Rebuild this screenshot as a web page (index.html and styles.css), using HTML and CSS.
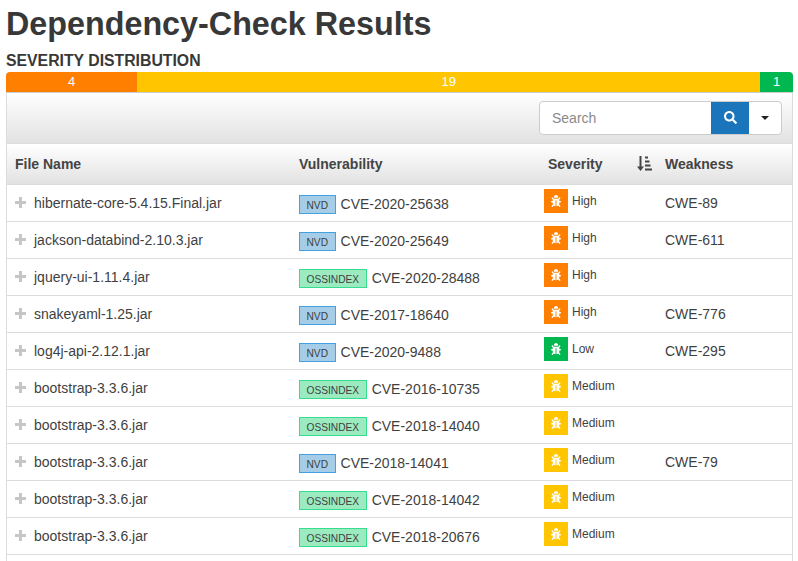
FILE: index.html
```html
<!DOCTYPE html>
<html lang="en">
<head>
    <meta charset="UTF-8">
    <title>Dependency-Check Results</title>
    <link rel="stylesheet" href="styles.css">
</head>
<body>
    <svg class="defs" width="0" height="0">
        <symbol id="bug" viewBox="0 0 512 512" preserveAspectRatio="none"><path d="M511.988 288.9c-.478 17.43-15.217 31.1-32.653 31.1H424v16c0 21.864-4.882 42.584-13.6 61.145l60.228 60.228c12.496 12.497 12.496 32.758 0 45.255-12.498 12.497-32.759 12.496-45.256 0l-54.736-54.736C345.886 467.965 314.351 480 280 480V236c0-6.627-5.373-12-12-12h-24c-6.627 0-12 5.373-12 12v244c-34.351 0-65.886-12.035-90.636-32.108l-54.736 54.736c-12.497 12.497-32.758 12.496-45.255 0-12.497-12.497-12.496-32.758 0-45.255l60.227-60.228C92.882 378.584 88 357.864 88 336v-16H32.666C15.23 320 .491 306.33.013 288.9-.484 270.816 14.028 256 32 256h56v-58.745l-46.628-46.628c-12.496-12.497-12.496-32.758 0-45.255 12.498-12.497 32.758-12.497 45.256 0L141.255 160h229.489l54.627-54.627c12.498-12.497 32.758-12.497 45.256 0 12.496 12.497 12.496 32.758 0 45.255L424 197.255V256h56c17.972 0 32.484 14.816 31.988 32.9zM257 0c-61.856 0-112 50.144-112 112h224C369 50.144 318.856 0 257 0z"/></symbol>
        <symbol id="plus" viewBox="0 0 11 11"><path d="M4 0h3v4h4v3H7v4H4V7H0V4h4z"/></symbol>
    </svg>

    <h1>Dependency-Check Results</h1>
    <h2>SEVERITY DISTRIBUTION</h2>
    <div class="dist">
        <div class="dist-high">4</div>
        <div class="dist-medium">19</div>
        <div class="dist-low">1</div>
    </div>

    <div class="panel">
        <div class="toolbar">
            <div class="search">
                <span class="search-input">Search</span>
                <span class="search-btn">
                    <svg width="13" height="13" viewBox="0 0 512 512"><path d="M505 442.7L405.3 343c-4.5-4.5-10.6-7-17-7H372c27.6-35.3 44-79.7 44-128C416 93.1 322.9 0 208 0S0 93.1 0 208s93.1 208 208 208c48.3 0 92.7-16.4 128-44v16.3c0 6.4 2.5 12.5 7 17l99.7 99.7c9.4 9.4 24.6 9.4 33.9 0l28.3-28.3c9.4-9.4 9.4-24.6.1-34zM208 336c-70.7 0-128-57.2-128-128 0-70.7 57.2-128 128-128 70.7 0 128 57.2 128 128 0 70.7-57.2 128-128 128z"/></svg>
                </span>
                <span class="search-menu"><span class="caret"></span></span>
            </div>
        </div>
        <table>
            <colgroup>
                <col class="col-file">
                <col class="col-vuln">
                <col class="col-sev">
                <col class="col-weak">
            </colgroup>
            <thead>
                <tr>
                    <th>File Name</th>
                    <th>Vulnerability</th>
                    <th>
                        <div class="sev-head">
                            <span>Severity</span>
                            <svg width="15" height="15" viewBox="0 0 15 15"><path d="M2.500 0h2v10.500h2.500L3.500 15 0 10.500h2.500z"/><path d="M8 0.500h3v2H8zM8 4.500h4.500v2H8zM8 8.500h5.500v2H8zM8 12.500h7v2H8z"/></svg>
                        </div>
                    </th>
                    <th>Weakness</th>
                </tr>
            </thead>
            <tbody>
                <tr>
                    <td><svg class="plus"><use href="#plus"/></svg>hibernate-core-5.4.15.Final.jar</td>
                    <td class="vuln"><span class="tag tag-nvd">NVD</span>CVE-2020-25638</td>
                    <td class="sev"><span class="bug bug-high"><svg><use href="#bug"/></svg></span>High</td>
                    <td>CWE-89</td>
                </tr>
                <tr>
                    <td><svg class="plus"><use href="#plus"/></svg>jackson-databind-2.10.3.jar</td>
                    <td class="vuln"><span class="tag tag-nvd">NVD</span>CVE-2020-25649</td>
                    <td class="sev"><span class="bug bug-high"><svg><use href="#bug"/></svg></span>High</td>
                    <td>CWE-611</td>
                </tr>
                <tr>
                    <td><svg class="plus"><use href="#plus"/></svg>jquery-ui-1.11.4.jar</td>
                    <td class="vuln"><span class="tag tag-oss">OSSINDEX</span>CVE-2020-28488</td>
                    <td class="sev"><span class="bug bug-high"><svg><use href="#bug"/></svg></span>High</td>
                    <td></td>
                </tr>
                <tr>
                    <td><svg class="plus"><use href="#plus"/></svg>snakeyaml-1.25.jar</td>
                    <td class="vuln"><span class="tag tag-nvd">NVD</span>CVE-2017-18640</td>
                    <td class="sev"><span class="bug bug-high"><svg><use href="#bug"/></svg></span>High</td>
                    <td>CWE-776</td>
                </tr>
                <tr>
                    <td><svg class="plus"><use href="#plus"/></svg>log4j-api-2.12.1.jar</td>
                    <td class="vuln"><span class="tag tag-nvd">NVD</span>CVE-2020-9488</td>
                    <td class="sev"><span class="bug bug-low"><svg><use href="#bug"/></svg></span>Low</td>
                    <td>CWE-295</td>
                </tr>
                <tr>
                    <td><svg class="plus"><use href="#plus"/></svg>bootstrap-3.3.6.jar</td>
                    <td class="vuln"><span class="tag tag-oss">OSSINDEX</span>CVE-2016-10735</td>
                    <td class="sev"><span class="bug bug-medium"><svg><use href="#bug"/></svg></span>Medium</td>
                    <td></td>
                </tr>
                <tr>
                    <td><svg class="plus"><use href="#plus"/></svg>bootstrap-3.3.6.jar</td>
                    <td class="vuln"><span class="tag tag-oss">OSSINDEX</span>CVE-2018-14040</td>
                    <td class="sev"><span class="bug bug-medium"><svg><use href="#bug"/></svg></span>Medium</td>
                    <td></td>
                </tr>
                <tr>
                    <td><svg class="plus"><use href="#plus"/></svg>bootstrap-3.3.6.jar</td>
                    <td class="vuln"><span class="tag tag-nvd">NVD</span>CVE-2018-14041</td>
                    <td class="sev"><span class="bug bug-medium"><svg><use href="#bug"/></svg></span>Medium</td>
                    <td>CWE-79</td>
                </tr>
                <tr>
                    <td><svg class="plus"><use href="#plus"/></svg>bootstrap-3.3.6.jar</td>
                    <td class="vuln"><span class="tag tag-oss">OSSINDEX</span>CVE-2018-14042</td>
                    <td class="sev"><span class="bug bug-medium"><svg><use href="#bug"/></svg></span>Medium</td>
                    <td></td>
                </tr>
                <tr>
                    <td><svg class="plus"><use href="#plus"/></svg>bootstrap-3.3.6.jar</td>
                    <td class="vuln"><span class="tag tag-oss">OSSINDEX</span>CVE-2018-20676</td>
                    <td class="sev"><span class="bug bug-medium"><svg><use href="#bug"/></svg></span>Medium</td>
                    <td></td>
                </tr>
            </tbody>
        </table>
    </div>
</body>
</html>
```

FILE: styles.css
```css
:root {
    --high-color: #ff8000;
    --medium-color: #ffc600;
    --low-color: #00b84f;
    --line-color: #dcdcdc;
    --text-color: #3f3f3f;
}

* {
    box-sizing: border-box;
}

html, body {
    height: 100%;
}

body {
    display: flex;
    flex-direction: column;
    margin: 0;
    padding: 0 5px 0 6px;
    font-family: "Liberation Sans", Arial, sans-serif;
    color: var(--text-color);
    background-color: #fff;
}

.defs {
    display: block;
    height: 0;
    flex: none;
}

h1 {
    margin: 0;
    padding-top: 6px;
    font-size: 32.3px;
    line-height: 36px;
    font-weight: bold;
    color: #383838;
}

h2 {
    margin: 8px 0 1px;
    font-size: 15.8px;
    line-height: 21px;
    font-weight: bold;
    color: #383838;
}

.dist {
    display: flex;
    flex: none;
    height: 20px;
    border-radius: 4px 4px 0 0;
    overflow: hidden;
    font-size: 13px;
    line-height: 20px;
    color: #fff;
    text-align: center;
}

.dist-high {
    flex: 4;
    background-color: var(--high-color);
}

.dist-medium {
    flex: 19;
    background-color: var(--medium-color);
}

.dist-low {
    flex: 1;
    background-color: var(--low-color);
}

.panel {
    flex: 1;
    min-height: 0;
    overflow: hidden;
    border-left: 1px solid var(--line-color);
    border-right: 1px solid var(--line-color);
    border-top: 1px solid #ccc;
}

.toolbar {
    display: flex;
    justify-content: flex-end;
    align-items: center;
    height: 51px;
    padding: 0 10px 0 0;
    background: linear-gradient(#fff, #e2e2e2);
    border-bottom: 1px solid var(--line-color);
}

.search {
    display: flex;
    height: 34px;
    margin-top: -1px;
    background-color: #fff;
    border: 1px solid #ccc;
    border-radius: 4px;
    overflow: hidden;
}

.search-input {
    width: 171px;
    padding-left: 12px;
    font-size: 14px;
    line-height: 32px;
    color: #8a8a8a;
}

.search-btn {
    display: flex;
    align-items: center;
    justify-content: center;
    width: 38px;
    margin: -1px 0;
    background-color: #1b75bb;
    fill: #fff;
}

.search-menu {
    display: flex;
    align-items: center;
    justify-content: center;
    width: 32px;
}

.caret {
    width: 0;
    height: 0;
    border-top: 4px solid #222;
    border-left: 4px solid transparent;
    border-right: 4px solid transparent;
}

table {
    width: 100%;
    table-layout: fixed;
    border-collapse: collapse;
}

.col-file { width: 284px; }
.col-vuln { width: 249px; }
.col-sev { width: 117px; }

th {
    height: 40px;
    padding: 0 8px;
    text-align: left;
    font-size: 14px;
    color: #444;
    background: linear-gradient(#fff, #e2e2e2);
    border-bottom: 1px solid var(--line-color);
}

.sev-head {
    display: flex;
    justify-content: space-between;
    align-items: center;
    margin-right: -3px;
}

.sev-head svg {
    fill: #444;
}

td {
    height: 37px;
    padding: 0 8px;
    font-size: 14px;
    color: var(--text-color);
    border-bottom: 1px solid var(--line-color);
    white-space: nowrap;
}

.plus {
    width: 11px;
    height: 11px;
    margin-right: 8px;
    vertical-align: -0.5px;
    fill: #c6c6c6;
}

td.vuln {
    padding-top: 3px;
}

.tag {
    display: inline-block;
    height: 19px;
    padding: 0 6.5px;
    margin-right: 5px;
    font-size: 10.2px;
    line-height: 19px;
    border: 1px solid;
}

.tag-nvd {
    background-color: #a5cde8;
    border-color: #45a0e0;
}

.tag-oss {
    background-color: #9cebc0;
    border-color: #35dd8f;
}

td.sev {
    padding: 4px 4px 8px;
    font-size: 12px;
    line-height: 24px;
    vertical-align: top;
}

.bug {
    display: inline-flex;
    align-items: center;
    justify-content: center;
    width: 24px;
    height: 24px;
    margin-right: 4px;
    vertical-align: top;
    fill: #fff;
}

.bug svg {
    width: 10px;
    height: 12px;
}

.bug-high { background-color: var(--high-color); }
.bug-medium { background-color: var(--medium-color); }
.bug-low { background-color: var(--low-color); }
```
